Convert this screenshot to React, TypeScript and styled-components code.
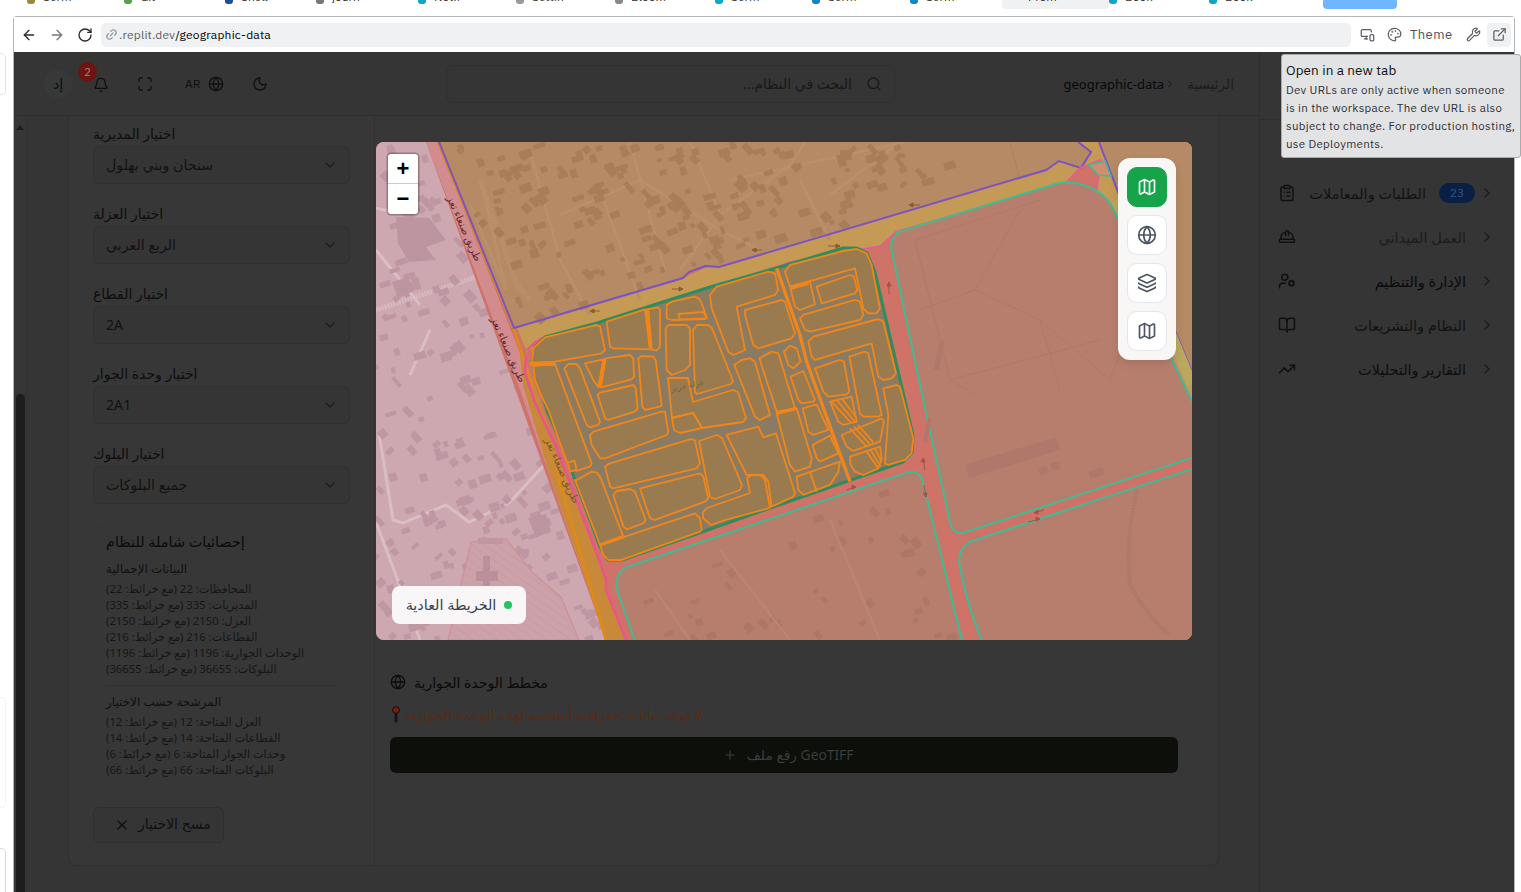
import React from "react";
import styled, { createGlobalStyle } from "styled-components";
import {
  ArrowLeft, ArrowRight, RotateCw, Link2, MonitorSmartphone, Palette, Wrench, ExternalLink,
  Bell, Maximize, Globe, Moon, Search, ChevronRight, ChevronDown, X, Plus, Map as MapIcon, Layers,
  ClipboardList, HardHat, UserCog, BookOpen, TrendingUp,
} from "lucide-react";

const FONT = `"Noto Sans", "DejaVu Sans", sans-serif`;
const UI = `"IBM Plex Sans", Roboto, "Liberation Sans", sans-serif`;

const Global = createGlobalStyle`
  html, body { margin: 0; padding: 0; background: #fff; overflow: hidden; }
  * { box-sizing: border-box; }
`;

const Page = styled.div`
  width: 1521px; height: 892px; overflow: hidden; display: flex; flex-direction: column;
  background: #fff; font-family: ${FONT};
`;
const TabStrip = styled.div`height: 16px; display: flex; overflow: hidden; padding-left: 27px; flex: none;`;
const Tab = styled.div<{ $w: number; $active?: boolean }>`
  width: ${(p) => p.$w}px; height: 9px; display: flex; gap: 8px; overflow: hidden; flex: none; font: 12px ${UI}; color: #333;
  background: ${(p) => (p.$active ? "#f0f1f3" : "transparent")}; border-radius: 0 0 4px 4px;
  padding-left: ${(p) => (p.$active ? 10 : 0)}px;
`;
const TabDot = styled.i<{ $c: string }>`width: 8px; height: 4px; flex: none; background: ${(p) => p.$c}; border-radius: 0 0 3px 3px;`;
const TabText = styled.span`margin-top: -10px; line-height: 14px; white-space: nowrap;`;
const BlueTab = styled.div`width: 74px; height: 9px; background: #6fb5ff; border-radius: 0 0 4px 4px; flex: none; margin-left: 11px;`;
const Frame = styled.div`flex: 1; display: flex; min-height: 0;`;
const Gutter = styled.div`width: 13px; flex: none; display: flex; flex-direction: column;`;
const GutterTab = styled.div<{ $h: number; $mt: number; $c: string }>`
  width: 6px; height: ${(p) => p.$h}px; margin-top: ${(p) => p.$mt}px; flex: none; background: #fff;
  border: 1px solid ${(p) => p.$c}; border-left: 0; border-radius: 0 5px 5px 0;
`;
const Win = styled.div`
  width: 1502px; flex: none; border: 1px solid #b4b5b6; border-bottom: 0; border-radius: 4px 4px 0 0; display: flex; flex-direction: column; min-height: 0;
`;
const Toolbar = styled.div`height: 35px; flex: none; display: flex; align-items: center; padding: 0 3px 0 1px; background: #fff; color: #333;`;
const NavBtn = styled.div<{ $dim?: boolean }>`width: 28px; height: 24px; display: flex; align-items: center; justify-content: center; color: ${(p) => (p.$dim ? "#777" : "#2a2a2a")};`;
const Address = styled.div`
  width: 1250px; height: 24px; margin-left: 2px; border-radius: 5px; background: #eff1f3; display: flex; align-items: center; padding: 0 0 1px 4px; gap: 1px; font: 12px ${UI};
  letter-spacing: .2px; color: #000;
`;
const Host = styled.span`color: #5c6066;`;
const ToolIcon = styled.div<{ $ml: number; $box?: boolean }>`
  width: ${(p) => (p.$box ? 24 : 20)}px; height: 24px; margin-left: ${(p) => p.$ml}px; display: flex; align-items: center; justify-content: center;
  color: #5c6066; background: ${(p) => (p.$box ? "#eff1f3" : "transparent")}; border-radius: 4px;
`;
const ThemeText = styled.span`margin-left: 6px; width: 44px; font: 13px ${UI}; letter-spacing: .4px; color: #4d5156;`;
const Tooltip = styled.div`
  position: absolute; left: 1281px; top: 54px; width: 240px; height: 104px; padding: 6px 0 0 4px; background: #e2e3e5; border: 1px solid #a9aaac; border-radius: 3px;
  font: 11.5px/18px ${UI}; letter-spacing: .31px; color: #2e3033; white-space: nowrap;
`;
const TipTitle = styled.div`font-size: 13.5px; letter-spacing: .1px; color: #111; line-height: 18px; margin-bottom: 2px;`;
const View = styled.div`flex: 1; display: flex; min-height: 0; background: #353535;`;
const LeftPart = styled.div`width: 1245px; flex: none; display: flex; flex-direction: column; min-height: 0;`;
const Header = styled.header`
  height: 64px; flex: none; display: flex; align-items: center; padding: 0 25px 0 29px; border-bottom: 1px solid #2f2f2f; color: #141414;
`;
const Avatar = styled.div`width: 30px; height: 30px; border-radius: 50%; background: #373839; display: flex; align-items: center; justify-content: center; font-size: 14px; color: #0e0e0e;`;
const BellWrap = styled.div`position: relative; width: 16px; height: 16px; margin-left: 20px; color: #101010;`;
const Count = styled.span`
  position: absolute; left: -15px; top: -14px; width: 19px; height: 20px; border-radius: 50%; background: #6e1414; color: #a8807c; font: 11px/20px ${UI}; text-align: center;
`;
const HeadIcon = styled.div<{ $ml: number }>`margin-left: ${(p) => p.$ml}px; display: flex; color: #101010;`;
const Lang = styled.span`margin-left: 32px; font: 12px ${UI}; color: #0e0e0e; width: 16px;`;
const SearchBox = styled.div`
  width: 449px; height: 38px; margin-left: 178px; border: 1px solid #303030; border-radius: 6px; display: flex; align-items: center; justify-content: flex-end; gap: 14px; padding-right: 12px;
  direction: ltr; color: #181818; font-size: 14px;
`;
const Rtl = styled.span`direction: rtl; unicode-bidi: isolate; white-space: nowrap;`;
const Crumbs = styled.div`margin-left: auto; display: flex; align-items: center; font-size: 13px; color: #080808;`;
const CrumbHome = styled(Rtl)`color: #1c1c1c; margin-left: 11px; font-size: 13.6px;`;
const Body = styled.div`flex: 1; display: flex; min-height: 0;`;
const Track = styled.div`width: 13px; flex: none; padding: 0 2px; display: flex; flex-direction: column; background: #363636; border-right: 1px solid #323232;`;
const TrackArrow = styled.div`width: 0; margin: 5px 0 0; border: 4px solid transparent; border-bottom: 5px solid #1c1c1c; align-self: center;`;
const Thumb = styled.div`margin-top: 264px; flex: 1; width: 9px; border-radius: 5px 5px 0 0; background: #1d1d1d;`;
const Card = styled.div`
  width: 1151px; height: 750px; margin-left: 41px; flex: none; display: flex; background: #373737; border: 1px solid #303030; border-top: 0; border-radius: 0 0 8px 8px;
`;
const Side = styled.div`width: 306px; flex: none; padding: 10px 24px 0 24px; border-right: 1px solid #303030; display: flex; flex-direction: column;`;
const Field = styled.div`height: 80px; flex: none; display: flex; flex-direction: column;`;
const FieldLabel = styled.div`height: 20px; line-height: 16px; font-size: 14px; color: #0e0e0e; direction: rtl; text-align: left; white-space: nowrap;`;
const Select = styled.div`
  height: 38px; border: 1px solid #303030; border-radius: 6px; background: #353535; display: flex; align-items: center; justify-content: space-between; padding: 0 11px 2px 12px;
  font-size: 14.2px; color: #121212; margin-top: 0;
`;
const Chev = styled.span`display: flex; color: #1e1e1e; margin-top: 2px;`;
const Stats = styled.div`height: 262px; padding: 5px 12px 8px; border: 1px solid #353535; border-radius: 6px; direction: rtl; text-align: left; white-space: nowrap;`;
const StatsTitle = styled.div`font-size: 14.4px; line-height: 20px; color: #0a0a0a; font-weight: 500; margin-bottom: 9px;`;
const StatsSub = styled.div`font-size: 12px; line-height: 16px; color: #101010; margin-bottom: 4px;`;
const StatLine = styled.div`font-size: 11.3px; line-height: 16px; color: #161616;`;
const Rule = styled.div`height: 1px; background: #303030; margin: 8px 0 8px;`;
const ClearBtn = styled.div`
  margin-top: 19px; width: 131px; height: 36px; border: 1px solid #2f2f2f; border-radius: 6px; background: #353535; display: flex; align-items: center; gap: 8px; padding: 0 0 3px 20px;
  font-size: 14px; color: #101010; flex: none;
`;
const ClearIcon = styled.span`display: flex; margin-top: 3px;`;
const Center = styled.div`flex: 1; min-width: 0; padding: 26px 0 0 1px; display: flex; flex-direction: column;`;
const MapCard = styled.div`position: relative; width: 816px; height: 498px; border-radius: 8px; overflow: hidden; flex: none; background: #cda8b0;`;
const MapSvg = styled.svg`display: block; width: 816px; height: 498px;`;
const Zoom = styled.div`
  position: absolute; left: 12px; top: 12px; width: 30px; height: 60px; background: #fff; border-radius: 3px; box-shadow: 0 0 0 1.5px rgba(0,0,0,.28); display: flex; flex-direction: column; font: 700 22px/30px "Liberation Sans", sans-serif; color: #000;
`;
const ZoomBtn = styled.div<{ $top?: boolean }>`height: 30px; text-align: center; border-bottom: ${(p) => (p.$top ? "1px solid #ccc" : "0")};`;
const Legend = styled.div`
  position: absolute; left: 16px; bottom: 16px; width: 134px; height: 38px; padding-bottom: 1px; border-radius: 8px; background: #f8f6f7; display: flex; align-items: center; justify-content: center; gap: 8px; font-size: 14.4px; color: #374151;
`;
const Dot = styled.i`width: 8px; height: 8px; border-radius: 50%; background: #22c55e; flex: none;`;
const Tools = styled.div`
  position: absolute; left: 742px; top: 16px; width: 58px; height: 202px; border-radius: 12px; background: #f8f7f6; box-shadow: 0 4px 10px rgba(0,0,0,.1); padding: 9px; display: flex; flex-direction: column; gap: 8px;
`;
const ToolBtn = styled.div<{ $on?: boolean }>`
  width: 40px; height: 40px; border-radius: 10px; display: flex; align-items: center; justify-content: center; background: ${(p) => (p.$on ? "#16a34a" : "#fff")};
  color: ${(p) => (p.$on ? "#fff" : "#4b5563")}; border: 1px solid ${(p) => (p.$on ? "#16a34a" : "#e3e5ea")};
`;
const Below = styled.div`padding: 32px 40px 0 14px; display: flex; flex-direction: column;`;
const SectionTitle = styled.div`height: 20px; display: flex; align-items: center; gap: 8px; font-size: 14px; color: #0a0a0a; white-space: nowrap;`;
const Warn = styled.div`height: 20px; margin-top: 12px; display: flex; align-items: center; gap: 5px; font-size: 14.2px; color: #5a2a14; white-space: nowrap; padding-left: 2px;`;
const Upload = styled.div`
  height: 36px; margin-top: 13px; border-radius: 6px; background: #0d0f0a; display: flex; align-items: center; justify-content: center; gap: 10px; padding: 0 0 1px 8px; color: #3d3d3d; font-size: 13.8px;
`;
const Nav = styled.aside`width: 255px; flex: none; border-left: 1px solid #2f2f2f; display: flex; flex-direction: column;`;
const NavTop = styled.div`height: 68px; flex: none; border-bottom: 1px solid #2f2f2f;`;
const NavList = styled.div`padding: 51px 19px 0 18px;`;
const NavRow = styled.div`height: 44px; display: flex; align-items: center; color: #101010;`;
const NavText = styled.span<{ $c: string }>`flex: 1; text-align: right; direction: rtl; padding: 0 13px 1px 0; font-size: 14.5px; color: ${(p) => p.$c}; white-space: nowrap;`;
const Pill = styled.span`width: 36px; height: 20px; margin: 0 4px 0 0; border-radius: 10px; background: #0a1f45; color: #34527e; font: 12px/20px ${UI}; text-align: center; flex: none;`;
const NavChev = styled.span`display: flex; flex: none; color: #1a1a1a;`;

const pts = (a: number[][]) => a.map((p) => p.join(",")).join(" ");

function inPoly(x: number, y: number, poly: number[][]) {
  let c = false;
  for (let i = 0, j = poly.length - 1; i < poly.length; j = i++) {
    const [xi, yi] = poly[i], [xj, yj] = poly[j];
    if (yi > y !== yj > y && x < ((xj - xi) * (y - yi)) / (yj - yi) + xi) c = !c;
  }
  return c;
}
let seed = 98765;
const rnd = () => {
  seed = (seed + 0x6d2b79f5) | 0;
  let t = Math.imul(seed ^ (seed >>> 15), 1 | seed);
  t = (t + Math.imul(t ^ (t >>> 7), 61 | t)) ^ t;
  return ((t ^ (t >>> 14)) >>> 0) / 4294967296;
};
function scatter(n: number, poly: number[][], avoid: number[][][] = [], maxW = 9, rot = -18) {
  const out: { x: number; y: number; w: number; h: number; r: number }[] = [];
  for (let i = 0; i < n; i++) {
    const x = 376 + rnd() * 816, y = 142 + rnd() * 498;
    const w = 4 + rnd() * maxW, h = 4 + rnd() * 5, r = rnd() < 0.6 ? rot : rot + 66;
    if (!inPoly(x, y, poly) || avoid.some((a) => inPoly(x, y, a))) continue;
    out.push({ x, y, w, h, r });
  }
  return out;
}

const BROWN = [[448,142],[520,322],[683,272],[709,260],[786,240],[900,205],[960,160],[960,142]];
const PINK = [[376,142],[424,142],[518,380],[604,640],[376,640]];
const PARK = [[471,542],[506,539],[533,573],[561,597],[579,640],[448,640]];
const LOWER = [[640,590],[790,525],[900,480],[955,640],[650,640]];
const brownB = scatter(1500, BROWN);
const pinkB = scatter(1300, PINK, [PARK, [[396,217],[429,218],[446,240],[436,260],[409,262]]]);
const lowerB = scatter(500, LOWER, [], 7);

const Z11: number[][][] = [
  [[20,218],[25,175],[60,142],[215,105],[225,110],[240,180],[230,190],[90,215]],
  [[245,95],[360,58],[375,178],[265,175],[255,170]],
  [[365,58],[400,52],[405,60],[405,170],[395,182],[378,178]],
  [[425,85],[425,45],[440,35],[510,20],[525,28],[545,80],[540,87],[440,90]],
  [[460,72],[535,66],[545,85],[465,88]],
  [[422,115],[430,105],[485,105],[495,115],[495,225],[480,240],[440,255],[425,240]],
  [[180,220],[235,208],[220,292],[205,270]],
  [[240,205],[315,195],[325,205],[327,260],[320,268],[228,292]],
  [[118,235],[130,222],[155,222],[165,235],[225,395],[220,405],[195,412],[185,405]],
  [[340,205],[350,198],[385,200],[392,210],[410,345],[405,350],[360,360],[352,350]],
  [[218,315],[225,308],[325,285],[332,295],[338,355],[330,365],[250,390],[240,385]],
  [[195,435],[205,425],[410,365],[420,365],[430,425],[425,435],[240,505],[225,505],[200,465]],
  [[25,228],[90,222],[200,520],[195,530],[155,543],[125,515],[70,360],[50,320],[30,270]],
  [[128,518],[148,512],[155,540],[135,545]],
  [[155,570],[200,545],[215,548],[225,560],[295,740],[225,765],[150,570]],
  [[240,530],[250,522],[500,447],[510,452],[525,520],[515,535],[265,595],[255,590]],
  [[345,595],[525,550],[535,560],[550,625],[540,635],[390,690],[375,685]],
  [[265,615],[275,603],[315,597],[330,605],[362,690],[355,700],[305,718],[295,710]],
  [[225,765],[510,670],[525,685],[530,720],[525,725],[290,810],[250,810],[235,795]],
];
const SCREEN: number[][][] = [
  [[693,330],[697,325],[708,325],[712,328],[733,381],[731,384],[697,394],[695,392]],
  [[668,378],[688,378],[693,402],[733,390],[738,392],[746,418],[743,422],[702,428],[693,413],[672,418]],
  [[672,418],[693,413],[702,428],[680,433],[674,430]],
  [[699,441],[717,435],[722,438],[742,485],[740,490],[715,499],[710,497]],
  [[703,512],[707,508],[750,493],[747,478],[753,474],[760,475],[765,480],[770,508],[725,520],[711,525],[703,518]],
];
const Z12: number[][][] = [
  [[30,150],[50,125],[205,80],[225,85],[235,135],[225,150],[110,185],[135,315],[100,330],[85,320],[35,190]],
  [[135,195],[245,165],[255,170],[285,265],[275,280],[175,310],[160,300],[135,210]],
  [[255,80],[270,60],[430,18],[470,12],[500,25],[515,60],[540,190],[530,205],[505,205],[490,190],[465,70],[270,125]],
  [[270,125],[330,110],[345,178],[300,195],[285,185]],
  [[350,125],[450,90],[462,95],[472,135],[465,145],[365,175]],
  [[300,220],[310,210],[465,165],[480,170],[490,210],[480,225],[330,260],[315,255]],
  [[325,290],[340,275],[535,222],[550,230],[588,385],[575,400],[550,405],[535,395],[515,295],[345,345],[335,335]],
  [[345,370],[420,345],[432,350],[448,440],[440,448],[385,455],[370,440]],
  [[448,335],[495,320],[505,325],[545,510],[535,515],[490,515],[480,505]],
  [[103,360],[125,345],[150,340],[165,350],[210,510],[180,525],[165,515]],
  [[178,340],[215,320],[235,325],[285,490],[230,500]],
  [[230,505],[290,490],[335,640],[330,665],[285,680],[270,660]],
  [[252,320],[270,302],[290,310],[302,350],[280,370],[265,360]],
  [[272,395],[310,378],[345,465],[340,470],[305,475],[295,465]],
  [[308,490],[350,478],[385,555],[340,570],[325,560]],
  [[338,600],[390,572],[415,625],[360,650],[350,640]],
  [[390,470],[455,455],[470,530],[430,540],[415,530]],
  [[425,570],[545,520],[552,530],[540,590],[460,618],[440,605]],
  [[450,635],[540,605],[545,640],[535,670],[490,690],[465,680],[452,660]],
  [[290,695],[420,650],[415,680],[390,720],[310,750],[295,735]],
  [[550,430],[590,420],[600,425],[640,580],[635,625],[615,645],[565,660],[555,655],[565,510]],
  [[80,570],[175,545],[190,577],[228,565],[285,745],[280,755],[215,785],[205,710],[190,690],[140,690],[125,660]],
];
const OUTER = [[532,360],[535,347],[545,337],[597,323],[710,287],[773,269],[843,248],[857,248],[867,253],[875,272],[913,435],[912,453],[903,462],[770,508],[702,532],[622,560],[608,560],[600,547],[575,480],[563,447],[548,413],[543,398],[535,373]];
const FAINT_ROADS = "M482 185L506 290M506 290L470 205M530 150L560 260L590 315M560 215L640 180M600 190L640 300M630 142L665 270M640 180L720 230L760 250M690 142L720 215M720 215L790 165L805 142M720 215L680 270M800 180L830 240M830 195L900 142M730 180L905 142";

function MapDrawing() {
  return (
    <MapSvg viewBox="376 142 816 498">
      <defs>
        <pattern id="hatch" width="7" height="7" patternUnits="userSpaceOnUse" patternTransform="rotate(35)">
          <rect width="7" height="7" fill="#cba2aa" />
          <line x1="0" y1="0" x2="7" y2="0" stroke="#d2929c" strokeWidth="1.2" />
        </pattern>
      </defs>
      <rect x="376" y="142" width="816" height="498" fill="#cda8b0" />
      <path d="M376 310L476 277" stroke="#d6bac0" strokeWidth="5" strokeDasharray="2 1" fill="none" />
      <path d="M376 208Q400 215 424 210M376 250L420 305M379 433L393 520L403 523L446 505L469 522L509 503L546 463M376 522L420 640M430 330L410 375" stroke="#d9bec4" strokeWidth="3" fill="none" />
      {pinkB.map((b, i) => (
        <rect key={i} x={b.x} y={b.y} width={b.w} height={b.h} fill="#bf97a2" transform={`rotate(${b.r} ${b.x} ${b.y})`} />
      ))}
      <polygon points={pts([[396,217],[429,218],[446,240],[426,247],[436,260],[409,262],[398,243]])} fill="#bd95a0" />
      <polygon points={pts([[392,282],[408,277],[414,291],[398,298]])} fill="#bd95a0" />
      <polygon points={pts([[528,518],[546,514],[551,532],[536,537]])} fill="#bd95a0" />
      <polygon points={pts(PARK)} fill="url(#hatch)" stroke="#d08e98" strokeWidth="1.2" />
      <path d="M483 556h7v15h8v10h-8v15h-7v-15h-7v-10h7z" fill="#bb8f9b" />
      <rect x="478" y="538" width="25" height="6" fill="#c3959e" />

      <polygon points={pts([[426,142],[1192,142],[1192,640],[606,640]])} fill="#cf7268" />
      <polygon points={pts([[426,142],[438,142],[533,387],[556,470],[612,640],[606,640],[520,390]])} fill="#d28c8d" />
      <polygon points={pts([[519,345],[533,380],[556,447],[598,557],[606,580],[606,590],[626,640],[606,640],[548,470],[523,385]])} fill="#c88a38" />
      <polyline points={pts([[438,142],[513,327],[533,387]])} fill="none" stroke="#d98a20" strokeWidth="3" />
      <polyline points={pts([[556,470],[606,640]])} fill="none" stroke="#dc8a1d" strokeWidth="3" />
      <polygon points={pts([[440,142],[514,328],[683,278],[709,266],[786,247],[1046,170],[1059,161],[1081,168],[1091,152],[1078,142],[1099,142],[1192,370],[1192,410],[1096,197],[1080,168],[1066,183],[896,232],[881,246],[786,263],[597,323],[540,338],[527,352]])} fill="#c49a55" />
      <polygon points={pts([[1080,168],[1100,160],[1096,197],[1066,183]])} fill="#cf7268" />
      <polygon points={pts([[439,142],[514,328],[683,278],[689,272],[709,266],[719,267],[786,247],[1046,170],[1059,161],[1081,168],[1091,152],[1078,142]])} fill="#b58a65" />
      <polygon points={pts([[1099,142],[1192,142],[1192,370],[1174,340]])} fill="#b58a65" />
      <path d={FAINT_ROADS} stroke="#b99069" strokeWidth="3" fill="none" />
      <path d="M480 180L517 285L530 300" stroke="#ba916b" strokeWidth="5" strokeDasharray="2 1" fill="none" />
      <path d="M1010 142L1020 180M1150 260L1170 300" stroke="#a98058" strokeWidth=".8" fill="none" />
      {brownB.map((b, i) => (
        <rect key={i} x={b.x} y={b.y} width={b.w} height={b.h} fill="#a87e59" transform={`rotate(${b.r} ${b.x} ${b.y})`} />
      ))}
      <rect x="840" y="150" width="12" height="10" fill="#a87e59" />
      <path d="M527 350L597 325L786 262M1020 196L1066 183" stroke="#d98a5c" strokeWidth="1.2" fill="none" />
      <polyline points={pts([[439,142],[514,328],[683,278],[689,272],[705,266],[719,267],[1046,170],[1059,161],[1081,168],[1091,152],[1078,142]])} fill="none" stroke="#7c52c4" strokeWidth="2" />
      <polyline points={pts([[1099,142],[1118,192],[1192,372]])} fill="none" stroke="#7c52c4" strokeWidth="2" />
      <polyline points={pts([[1116,200],[1192,384]])} fill="none" stroke="#b9a85e" strokeWidth="10" />
      <polyline points={pts([[786,263],[881,246],[896,232],[1066,183],[1080,168],[1100,160],[1096,197],[1116,237],[1192,402]])} fill="none" stroke="#e0608f" strokeWidth="2" />
      <polyline points={pts([[526,355],[525,373],[535,403],[556,447],[598,557],[606,580],[606,590],[626,640]])} fill="none" stroke="#e8558c" strokeWidth="2.6" />
      <polyline points={pts([[527,350],[535,342],[545,337]])} fill="none" stroke="#e8558c" strokeWidth="2" />

      <g stroke="#3dbd94" strokeWidth="2" fill="#b77e6e">
        <path d="M891 247Q891 240 898 232L1059 183Q1085 180 1106 198Q1114 208 1118 220L1169 353L1195 408L1195 457L963 533Q953 535 950 522L921 390Z" />
        <path d="M1195 468L969 542Q959 548 959 562Q965 600 983 644L1195 644Z" />
        <path d="M616 587Q616 570 630 566L909 472Q920 470 923 482L963 644L636 644Z" />
      </g>
      <polygon points={pts([[1089,165],[1105,161],[1111,176],[1098,175]])} fill="#d58a72" stroke="#3dbd94" strokeWidth="1.6" />
      <g stroke="#b07868" strokeWidth="1" fill="none">
        <path d="M915 240L950 380L975 395M915 240L1040 200M1020 210L975 290L1040 320M975 290L920 310M1040 320L1110 380L1140 300M1040 320L1060 390M1140 300L1150 360M950 380L1100 340" />
      </g>
      <g fill="#b0786a">
        <polygon points={pts([[965,465],[1056,437],[1060,450],[969,478]])} />
        <rect x="1038" y="468" width="9" height="8" transform="rotate(-18 1038 468)" />
        <rect x="1050" y="464" width="9" height="8" transform="rotate(-18 1050 464)" />
        <rect x="1088" y="472" width="15" height="7" transform="rotate(-18 1088 472)" />
        <rect x="928" y="418" width="4" height="24" transform="rotate(12 928 418)" />
        <rect x="940" y="340" width="5" height="30" transform="rotate(12 940 340)" />
      </g>
      <path d="M1137 490Q1125 540 1130 585Q1150 620 1170 635" stroke="#ad7868" strokeWidth="4" strokeDasharray="2 1" fill="none" />
      {lowerB.map((b, i) => (
        <rect key={i} x={b.x} y={b.y} width={b.w} height={b.h} fill="#ad7667" transform={`rotate(${b.r} ${b.x} ${b.y})`} />
      ))}
      <path d="M655 590L690 640M720 550L790 640M830 520L880 640" stroke="#bb8474" strokeWidth="2.5" fill="none" />

      <polygon points={pts(OUTER)} fill="#8c7b63" stroke="#2f8c5e" strokeWidth="3" strokeLinejoin="round" />
      <g fill="#9a7b50" stroke="#ef861c" strokeLinejoin="round">
        <g transform="translate(525 290) scale(.3333)" strokeWidth="5.5">
          {Z11.map((p, i) => <polygon key={i} points={pts(p)} />)}
          <path d="M15 222L90 222M225 765L295 740M368 58L378 178M240 205L225 292" strokeWidth="10" fill="none" />
        </g>
        {SCREEN.map((p, i) => <polygon key={i} points={pts(p)} strokeWidth="1.8" />)}
        <g transform="translate(700 245) scale(.3333)" strokeWidth="5.5">
          {Z12.map((p, i) => <polygon key={i} points={pts(p)} />)}
          <path d="M230 70L300 270L320 350L450 710M270 130L325 115M230 505L290 490" strokeWidth="10" fill="none" />
          <path d="M330 680L350 740M395 470L455 535M410 465L465 530M425 460L470 520M450 550L500 605M462 545L512 600M474 540L520 592M500 620L535 670M512 615L542 665M525 610L545 650" strokeWidth="5.5" fill="none" />
        </g>
      </g>
      <g fontFamily={FONT} direction="rtl">
        <text x="461" y="230" fontSize="10.5" fill="#5f2b35" textAnchor="middle" transform="rotate(66 461 230)">طريق صنعاء تعز</text>
        <text x="505" y="351" fontSize="10.5" fill="#5f2b35" textAnchor="middle" transform="rotate(66 505 351)">طريق صنعاء تعز</text>
        <text x="559" y="472" fontSize="10.5" fill="#7a5a2c" textAnchor="middle" transform="rotate(66 559 472)">طريق صنعاء تعز</text>
        <text x="688" y="388" fontSize="8" fill="#7a6242" textAnchor="middle" transform="rotate(-12 688 388)">عزلة حرير</text>
      </g>
      <g stroke="#8d5d2d" strokeWidth="1" fill="#8d5d2d">
        <path d="M590 311h10M590 311l4 -2v4zM672 289h11M683 289l-4 -2v4zM762 250h-10M752 250l4 -2v4zM920 205h-11M909 205l4 -2v4zM840 246h-12M840 246l-4 -2v4z" />
      </g>
      <g stroke="#a85048" strokeWidth="1" fill="#a85048">
        <path d="M889 282v12M889 282l-2 4h4zM923 458l2 12M923 458l-2 4h4zM924 485l2 12M926 497l-3 -4h4zM1044 510l-10 3M1034 513l4 -3v4zM1040 519l-12 3M1040 519l-4 -2v4zM856 487l-10 3M856 487l-4 -2v4z" />
      </g>
    </MapSvg>
  );
}

const FIELDS = [
  ["اختيار المديرية", "سنحان وبني بهلول"],
  ["اختيار العزلة", "الربع الغربي"],
  ["اختيار القطاع", "2A"],
  ["اختيار وحدة الجوار", "2A1"],
  ["اختيار البلوك", "جميع البلوكات"],
];
const TOTALS = [
  "المحافظات: 22 (مع خرائط: 22)",
  "المديريات: 335 (مع خرائط: 335)",
  "العزل: 2150 (مع خرائط: 2150)",
  "القطاعات: 216 (مع خرائط: 216)",
  "الوحدات الجوارية: 1196 (مع خرائط: 1196)",
  "البلوكات: 36655 (مع خرائط: 36655)",
];
const FILTERED = [
  "العزل المتاحة: 12 (مع خرائط: 12)",
  "القطاعات المتاحة: 14 (مع خرائط: 14)",
  "وحدات الجوار المتاحة: 6 (مع خرائط: 6)",
  "البلوكات المتاحة: 66 (مع خرائط: 66)",
];
const NAV = [
  { icon: ClipboardList, label: "الطلبات والمعاملات", badge: "23", c: "#121212" },
  { icon: HardHat, label: "العمل الميداني", c: "#1c1c1c" },
  { icon: UserCog, label: "الإدارة والتنظيم", c: "#0a0a0a" },
  { icon: BookOpen, label: "النظام والتشريعات", c: "#121212" },
  { icon: TrendingUp, label: "التقارير والتحليلات", c: "#0e0e0e" },
];
const TABS: [number, string, string, boolean?][] = [
  [97, "#9a8a3a", "Serm"], [101, "#5aa04a", "Git"], [91, "#1c4e9c", "Shell"], [102, "#777", "journ"], [98, "#0ea5c6", "Notif"],
  [99, "#999", "Settin"], [100, "#888", "Bloom"], [97, "#0ea5c6", "Serm"], [98, "#1384c8", "Serm"], [92, "#1384c8", "Serm"],
  [107, "transparent", "Prom", true], [100, "#0ea5c6", "Book"], [103, "#0ea5c6", "Book"],
];

export default function App() {
  return (
    <Page>
      <Global />
      <TabStrip>
        {TABS.map(([w, c, t, a], i) => (
          <Tab key={i} $w={w} $active={a}>
            <TabDot $c={c} />
            <TabText>{t}</TabText>
          </Tab>
        ))}
        <BlueTab />
      </TabStrip>
      <Frame>
        <Gutter>
          <GutterTab $h={42} $mt={37} $c="#e2e2e2" />
          <GutterTab $h={111} $mt={602} $c="#f2f2f2" />
          <GutterTab $h={60} $mt={40} $c="#d8d8d8" />
        </Gutter>
        <Win>
          <Toolbar>
            <NavBtn><ArrowLeft size={16} /></NavBtn>
            <NavBtn $dim><ArrowRight size={16} /></NavBtn>
            <NavBtn><RotateCw size={16} /></NavBtn>
            <Address>
              <Link2 size={13} color="#8a8f96" style={{ transform: "rotate(-45deg)" }} />
              <span><Host>.replit.dev</Host>/geographic-data</span>
            </Address>
            <ToolIcon $ml={6}><MonitorSmartphone size={15} /></ToolIcon>
            <ToolIcon $ml={7}><Palette size={15} /></ToolIcon>
            <ThemeText>Theme</ThemeText>
            <ToolIcon $ml={9}><Wrench size={15} /></ToolIcon>
            <ToolIcon $ml={4} $box><ExternalLink size={15} /></ToolIcon>
          </Toolbar>
          <View>
            <LeftPart>
              <Header>
                <Avatar>إد</Avatar>
                <BellWrap><Bell size={16} /><Count>2</Count></BellWrap>
                <HeadIcon $ml={28}><Maximize size={16} /></HeadIcon>
                <Lang>AR</Lang>
                <HeadIcon $ml={7}><Globe size={16} /></HeadIcon>
                <HeadIcon $ml={28}><Moon size={16} /></HeadIcon>
                <SearchBox>
                  <Rtl>البحث في النظام...</Rtl>
                  <Search size={16} color="#1a1a1a" />
                </SearchBox>
                <Crumbs>
                  <span>geographic-data</span>
                  <ChevronRight size={12} color="#141414" />
                  <CrumbHome>الرئيسية</CrumbHome>
                </Crumbs>
              </Header>
              <Body>
                <Track><TrackArrow /><Thumb /></Track>
                <Card>
                  <Side>
                    {FIELDS.map(([l, v]) => (
                      <Field key={l}>
                        <FieldLabel>{l}</FieldLabel>
                        <Select><Rtl>{v}</Rtl><Chev><ChevronDown size={16} /></Chev></Select>
                      </Field>
                    ))}
                    <Stats>
                      <StatsTitle>إحصائيات شاملة للنظام</StatsTitle>
                      <StatsSub>البيانات الإجمالية</StatsSub>
                      {TOTALS.map((t) => <StatLine key={t}>{t}</StatLine>)}
                      <Rule />
                      <StatsSub>المرشحة حسب الاختيار</StatsSub>
                      {FILTERED.map((t) => <StatLine key={t}>{t}</StatLine>)}
                    </Stats>
                    <ClearBtn><ClearIcon><X size={16} /></ClearIcon><Rtl>مسح الاختيار</Rtl></ClearBtn>
                  </Side>
                  <Center>
                    <MapCard>
                      <MapDrawing />
                      <Zoom><ZoomBtn $top>+</ZoomBtn><ZoomBtn>−</ZoomBtn></Zoom>
                      <Legend><Rtl>الخريطة العادية</Rtl><Dot /></Legend>
                      <Tools>
                        <ToolBtn $on><MapIcon size={20} /></ToolBtn>
                        <ToolBtn><Globe size={20} /></ToolBtn>
                        <ToolBtn><Layers size={20} /></ToolBtn>
                        <ToolBtn><MapIcon size={20} /></ToolBtn>
                      </Tools>
                    </MapCard>
                    <Below>
                      <SectionTitle><Globe size={16} color="#0c0c0c" /><Rtl>مخطط الوحدة الجوارية</Rtl></SectionTitle>
                      <Warn>
                        <svg width="8" height="17" viewBox="0 0 8 17">
                          <rect x="2.6" y="6" width="2.8" height="10.5" rx="1" fill="#151515" />
                          <circle cx="4" cy="4" r="3.4" fill="#7a1d0c" stroke="#0f0f0f" strokeWidth="1" />
                        </svg>
                        <Rtl>لا توجد بيانات جغرافية أساسية لهذه الوحدة الجوارية</Rtl>
                      </Warn>
                      <Upload><Plus size={14} /><span>رفع ملف GeoTIFF</span></Upload>
                    </Below>
                  </Center>
                </Card>
              </Body>
            </LeftPart>
            <Nav>
              <NavTop />
              <NavList>
                {NAV.map((n) => (
                  <NavRow key={n.label}>
                    <n.icon size={18} />
                    <NavText $c={n.c}>{n.label}</NavText>
                    {n.badge && <Pill>{n.badge}</Pill>}
                    <NavChev><ChevronRight size={16} /></NavChev>
                  </NavRow>
                ))}
              </NavList>
            </Nav>
          </View>
        </Win>
      </Frame>
      <Tooltip>
        <TipTitle>Open in a new tab</TipTitle>
        Dev URLs are only active when someone<br />
        is in the workspace. The dev URL is also<br />
        subject to change. For production hosting,<br />
        use Deployments.
      </Tooltip>
    </Page>
  );
}
